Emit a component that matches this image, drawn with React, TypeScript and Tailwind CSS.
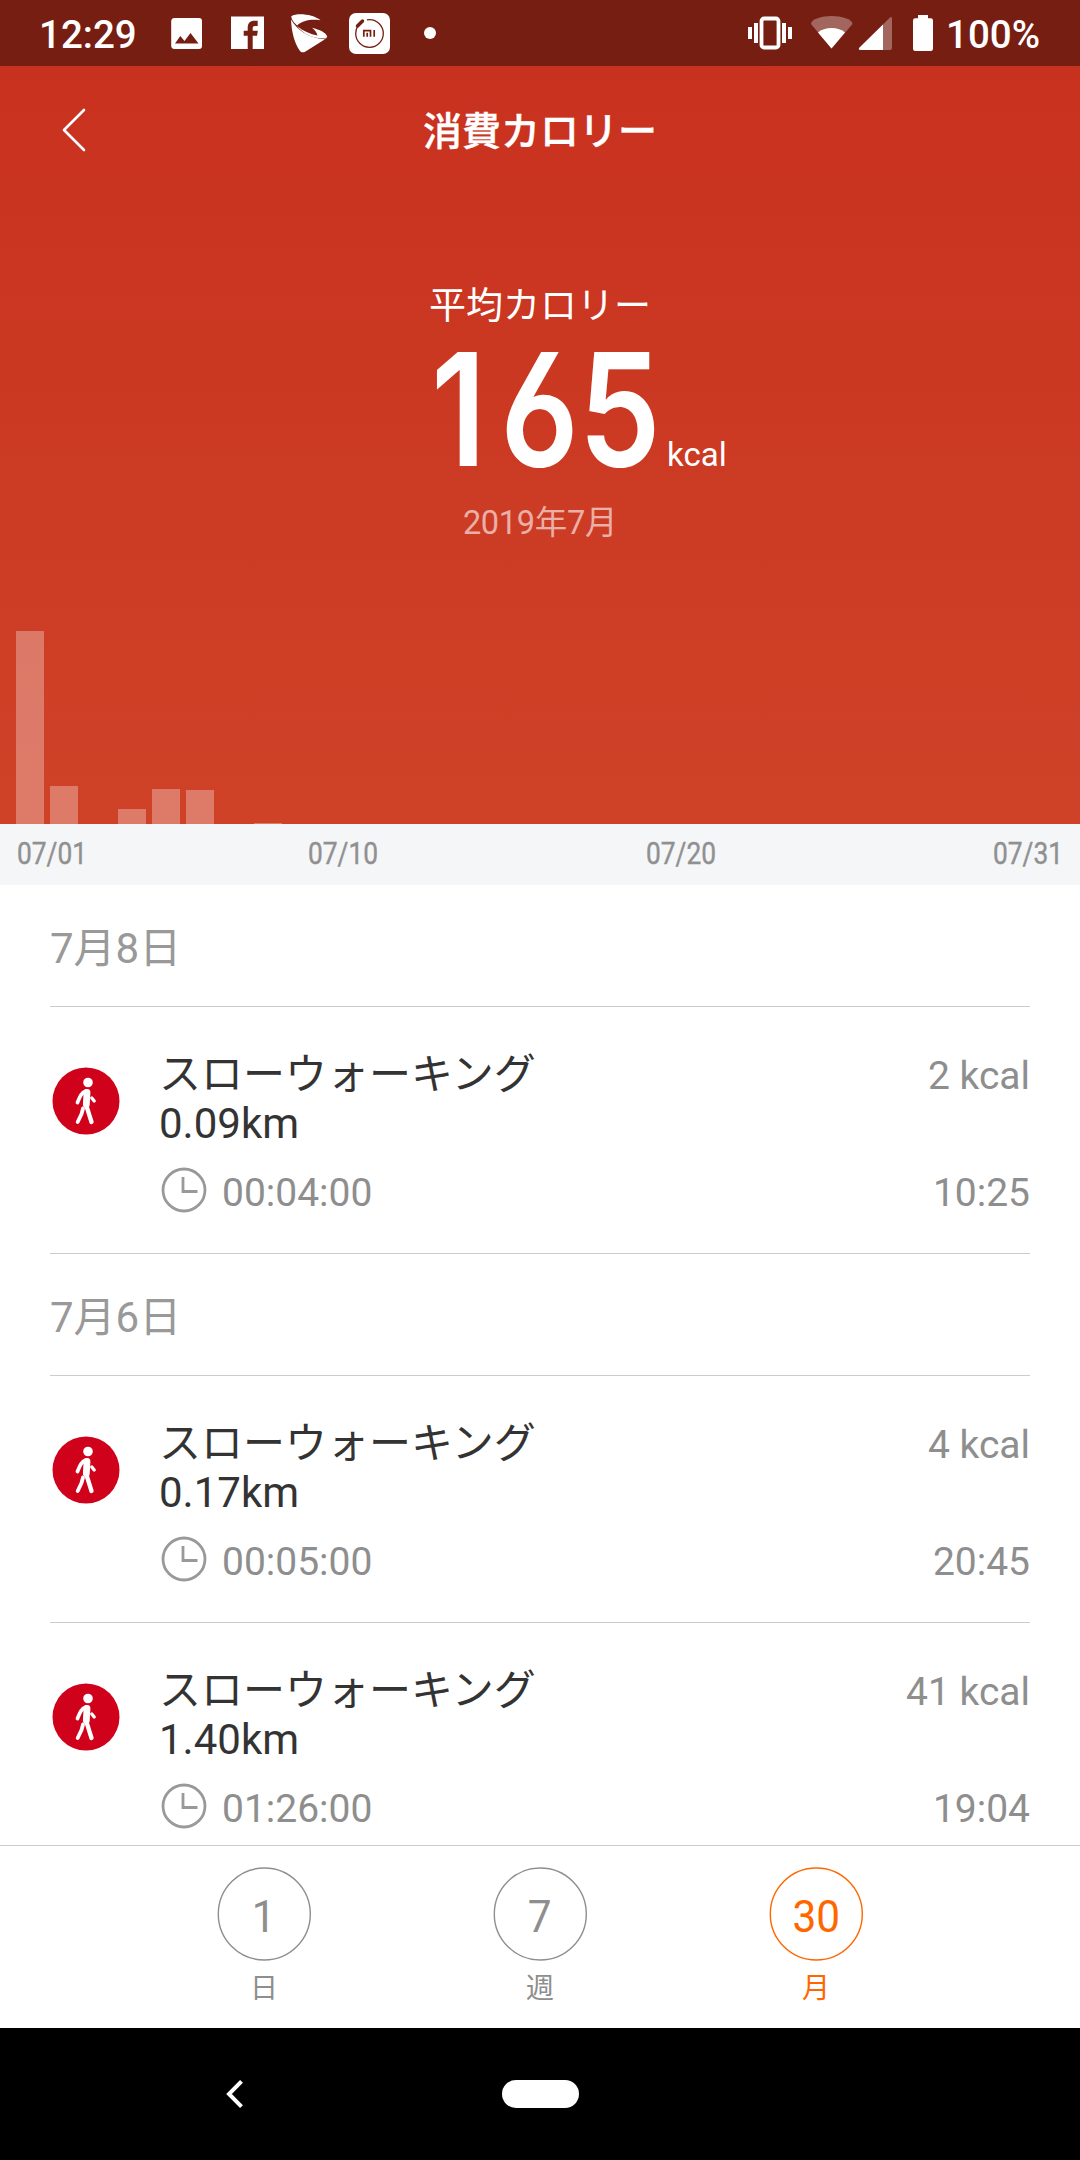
import React from "react";

const BAR_HEIGHTS = [193, 38, 0, 15, 35, 34, 0, 1];

type Activity = { distance: string; duration: string; kcal: string; time: string };

const DAYS: { date: string; items: Activity[] }[] = [
  {
    date: "7月8日",
    items: [{ distance: "0.09km", duration: "00:04:00", kcal: "2 kcal", time: "10:25" }],
  },
  {
    date: "7月6日",
    items: [
      { distance: "0.17km", duration: "00:05:00", kcal: "4 kcal", time: "20:45" },
      { distance: "1.40km", duration: "01:26:00", kcal: "41 kcal", time: "19:04" },
    ],
  },
];

function StatusBar() {
  return (
    <div className="flex h-[66px] shrink-0 items-center bg-[#771e12] text-[38.5px] font-medium leading-[64px] text-white">
      <span className="ml-[39px] w-[132px] pt-[4px]">12:29</span>
      <svg className="h-[66px] w-[270px]" viewBox="171 0 270 66" fill="#fff">
        <path fillRule="evenodd" d="M174.500 18h24.500a3 3 0 0 1 3 3v25a3 3 0 0 1-3 3h-24.500a3.300 3.300 0 0 1-3.300-3V21a3.300 3.300 0 0 1 3.300-3zM175 43.500h23.500L190.500 33l-6 8-4.200-5z" />
        <path d="M231 16.500h33V49H252.700V35.700h4.400l.7-5H252.700V28.300c0-1.500.7-2.300 2.300-2.300h2.700V20.700H254.200c-4 0-6.500 2.300-6.500 7.300V30.700h-4v5h4V49H231z" />
        <path d="M291.300 16.200C297 12.500 313 14 320.500 20.200C311 19 302 20.500 297.200 25.500C294.500 23 291.500 20 291.300 16.200z" />
        <path d="M291 19.500C297 30 308 38 325 39.200L305.500 51.500C303 53 301 52.500 299.600 50.500C294 42 291.500 31 291 19.500z" />
        <path d="M297 26C303 31 310 34 317.500 35.600C317 32.500 315 30 312 27.700C320 30 325.500 32 327.300 36.500L326 38.500C314 38.800 304 35 297 26z" />
        <rect x="349" y="13" width="41" height="41" rx="7" />
        <circle cx="369.500" cy="33.500" r="13.800" fill="none" stroke="#771e12" strokeWidth="1.300" strokeDasharray="77 9.700" strokeDashoffset="-62" />
        <path d="M357.500 26l5-5" stroke="#771e12" strokeWidth="3.500" strokeLinecap="round" />
        <path d="M363.800 36.700v-6h6.700v6M367.200 32.800v3.900M374.200 30v6.700" stroke="#771e12" strokeWidth="1.700" fill="none" />
        <circle cx="430" cy="33" r="6" />
      </svg>
      <svg className="ml-auto h-[66px] w-[190px]" viewBox="745 0 190 66" fill="#fff">
        <rect x="761.500" y="18.500" width="17" height="29" rx="2.500" fill="none" stroke="#fff" strokeWidth="3.800" />
        <path d="M748 27h4v12h-4zM754 23h4v20h-4zM782 23h4v20h-4zM788 27h4v12h-4z" />
        <path d="M831.500 48.500L811 24C811 19 822 16 831.500 16S852.500 19 852.500 24z" opacity=".32" />
        <path d="M831.500 48.500L818 32.500C824 26.500 839 26.500 845 32.500z" />
        <path d="M890.500 17L860 47.500Q858 50 861 50H890a2 2 0 0 0 2-2V18.500Q892 16.500 890.500 17z" opacity=".32" />
        <path d="M883 24.500L859.500 47.500Q857.500 50 861 50H883z" />
        <path d="M918 15h10v3.200h2.800a2.200 2.200 0 0 1 2.200 2.200v28.400a2.200 2.200 0 0 1-2.200 2.200h-15.600a2.200 2.200 0 0 1-2.200-2.200V20.400a2.200 2.200 0 0 1 2.200-2.200h2.800z" />
      </svg>
      <span className="mr-[40px] ml-[11px] pt-[4px]">100%</span>
    </div>
  );
}

function Summary() {
  return (
    <section className="flex h-[758px] shrink-0 flex-col bg-linear-to-b from-[#c8311e] to-[#cf4228] text-white">
      <header className="grid h-[128px] grid-cols-[120px_1fr_120px] items-center">
        <svg className="ml-[60px] h-[46px] w-[28px]" viewBox="0 0 28 46" fill="none" stroke="#fff" strokeWidth="2.600" strokeLinecap="round" strokeLinejoin="round">
          <path d="M24 3L4 23l20 20" />
        </svg>
        <h1 className="pt-[4px] text-center text-[39px] font-medium leading-[56px] [-webkit-text-stroke:0.4px_white]">消費カロリー</h1>
      </header>
      <div className="mt-[85px] text-center text-[37px] leading-[56px]">平均カロリー</div>
      <div className="-mt-[1px] ml-[431px] flex h-[146px] items-baseline">
        <span className="w-[236px] origin-left scale-x-[0.83] font-[Inter] text-[157px] font-semibold leading-[150px] [font-feature-settings:'cv03']">
          <span className="tracking-[17px]">1</span>65
        </span>
        <span className="text-[33px] leading-[40px]">kcal</span>
      </div>
      <div className="mt-[19px] text-center text-[32.5px] leading-[48px] tracking-[-0.3px] text-white/60">2019年7月</div>
      <div className="mt-auto flex items-end gap-[6px] pl-[16px]">
        {BAR_HEIGHTS.map((h, i) => (
          <div key={i} className="w-[28px] bg-white/30" style={{ height: h }} />
        ))}
      </div>
    </section>
  );
}

function Axis() {
  return (
    <div className="grid h-[61px] shrink-0 grid-cols-[291px_338px_347px_1fr] items-center bg-[#f5f6f8] pl-[17px] text-[31px] leading-[57px] text-[#909090]">
      {["07/01", "07/10", "07/20", "07/31"].map((d) => (
        <span key={d} className="origin-left scale-x-[0.85] pb-[2px] [-webkit-text-stroke:0.4px_#909090]">{d}</span>
      ))}
    </div>
  );
}

function WalkIcon() {
  return (
    <svg className="mt-[60px] ml-[2px] h-[68px] w-[68px]" viewBox="0 0 68 68">
      <circle cx="34" cy="34" r="33.500" fill="#d0021b" />
      <circle cx="36" cy="15.500" r="4.800" fill="#fff" />
      <g fill="none" stroke="#fff" strokeLinecap="round" strokeLinejoin="round">
        <path d="M35 25.500L34.300 37.500" strokeWidth="6.800" />
        <path d="M34 37.500L39.500 55" strokeWidth="4.300" />
        <path d="M31 41.500L29.500 47L25.700 55" strokeWidth="3.800" />
        <path d="M34 24C29 26 28 29.500 25.500 35.500" strokeWidth="3.800" />
        <path d="M39.800 31L42.200 34" strokeWidth="3.400" />
      </g>
    </svg>
  );
}

function ActivityRow({ item }: { item: Activity }) {
  return (
    <div className="mx-[50px] flex h-[247px] shrink-0 border-b border-[#cccccc]">
      <WalkIcon />
      <div className="ml-[39px] flex-1 pt-[43px]">
        <div className="text-[42px] leading-[49px] text-[#333333]">
          <div>スローウォーキング</div>
          <div>{item.distance}</div>
        </div>
        <div className="mt-[19px] flex items-start">
          <svg className="ml-[2px] h-[46px] w-[46px]" viewBox="0 0 46 46" fill="none" stroke="#999" strokeWidth="2.800">
            <circle cx="23" cy="23" r="21" />
            <path d="M22 10v14.500h14.500" />
          </svg>
          <span className="ml-[15px] pt-[3px] text-[39px] leading-[46px] text-[#8e8e8e]">{item.duration}</span>
        </div>
      </div>
      <div className="flex flex-col items-end pt-[46px] text-[39px] leading-[47px] text-[#8e8e8e]">
        <span>{item.kcal}</span>
        <span className="mt-[70px]">{item.time}</span>
      </div>
    </div>
  );
}

function Tab({ value, label, active }: { value: string; label: string; active?: boolean }) {
  return (
    <div className={active ? "flex w-[94px] flex-col items-center text-[#ff6600]" : "flex w-[94px] flex-col items-center text-[#8e8e8e]"}>
      <div className="relative flex h-[94px] w-[94px] items-center justify-center pt-[5px] text-[45px] leading-[48px]">
        <svg className="absolute inset-0 h-[94px] w-[94px]" viewBox="0 0 94 94" fill="none" stroke="currentColor" strokeWidth="1.400">
          <circle cx="47.300" cy="47" r="46" />
        </svg>
        <span className="scale-x-[0.94]">{value}</span>
      </div>
      <div className="mt-[8px] text-[28px] leading-[40px]">{label}</div>
    </div>
  );
}

export default function App() {
  return (
    <div className="flex h-[2160px] w-[1080px] flex-col overflow-hidden bg-white font-[Roboto,'Noto_Sans_CJK_JP',sans-serif]" lang="ja">
      <StatusBar />
      <Summary />
      <Axis />
      <main className="flex min-h-0 flex-1 flex-col overflow-hidden">
        {DAYS.map((day) => (
          <React.Fragment key={day.date}>
            <h2 className="mx-[50px] h-[122px] shrink-0 border-b border-[#cccccc] text-[42px] leading-[128px] text-[#999999]">{day.date}</h2>
            {day.items.map((item) => (
              <ActivityRow key={item.time} item={item} />
            ))}
          </React.Fragment>
        ))}
      </main>
      <nav className="flex h-[183px] shrink-0 justify-center gap-[182px] border-t border-[#cccccc] bg-white pt-[21px]">
        <Tab value="1" label="日" />
        <Tab value="7" label="週" />
        <Tab value="30" label="月" active />
      </nav>
      <div className="grid h-[132px] shrink-0 grid-cols-[502px_77px] items-center bg-black">
        <svg className="ml-[224px] h-[32px] w-[22px]" viewBox="0 0 22 32" fill="none" stroke="#fff" strokeWidth="4">
          <path d="M17.500 3.300L5 16l12.500 12.700" />
        </svg>
        <div className="h-[28px] rounded-full bg-white" />
      </div>
    </div>
  );
}
